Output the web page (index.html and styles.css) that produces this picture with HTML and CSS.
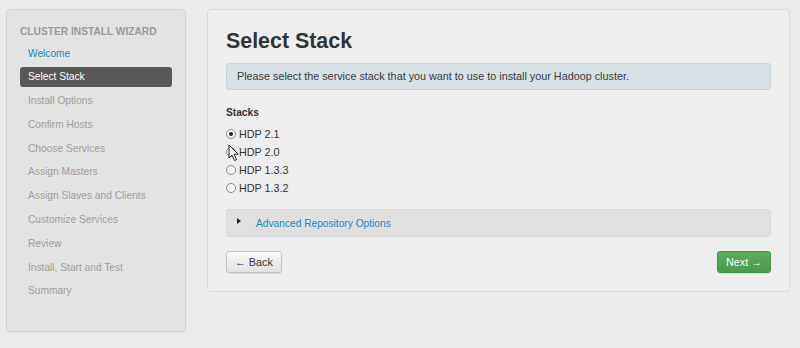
FILE: index.html
```html
<!DOCTYPE html>
<html>
<head>
<meta charset="utf-8">
<link rel="stylesheet" href="styles.css">
</head>
<body>
<div class="layout">
  <aside class="sidebar">
    <div class="wizard-title">CLUSTER INSTALL WIZARD</div>
    <ul class="steps">
      <li class="step done">Welcome</li>
      <li class="step active">Select Stack</li>
      <li class="step">Install Options</li>
      <li class="step">Confirm Hosts</li>
      <li class="step">Choose Services</li>
      <li class="step">Assign Masters</li>
      <li class="step">Assign Slaves and Clients</li>
      <li class="step">Customize Services</li>
      <li class="step">Review</li>
      <li class="step">Install, Start and Test</li>
      <li class="step">Summary</li>
    </ul>
  </aside>
  <main class="panel">
    <h2 class="title">Select Stack</h2>
    <div class="alert">Please select the service stack that you want to use to install your Hadoop cluster.</div>
    <div class="stacks-label">Stacks</div>
    <div class="radios">
      <label class="radio"><span class="dot checked"></span>HDP 2.1</label>
      <label class="radio"><span class="dot"></span>HDP 2.0</label>
      <label class="radio"><span class="dot"></span>HDP 1.3.3</label>
      <label class="radio"><span class="dot"></span>HDP 1.3.2</label>
      <svg class="cursor" width="12" height="18" viewBox="0 0 12 18"><path d="M1 1 L1 14 L4 11 L6.5 16.5 L8.5 15.6 L6 10.2 L10.2 10.2 Z" fill="#fff" stroke="#222" stroke-width="1" stroke-linejoin="round"/></svg>
    </div>
    <div class="accordion">
      <span class="caret"></span>
      <span class="acc-link">Advanced Repository Options</span>
    </div>
    <div class="actions">
      <button class="btn">&larr; Back</button>
      <button class="btn btn-success">Next &rarr;</button>
    </div>
  </main>
</div>
</body>
</html>
```
FILE: styles.css
```css
html, body {
  margin: 0;
  padding: 0;
}
body {
  background: #ebebeb;
  font-family: "Liberation Sans", Arial, sans-serif;
  font-size: 10.2px;
  color: #333;
  width: 800px;
  height: 348px;
  overflow: hidden;
}
.layout {
  display: flex;
  align-items: flex-start;
  gap: 21px;
  padding: 9px 10px 0 6px;
}
.sidebar {
  width: 152px;
  height: 305px;
  padding: 16px 13px 0 13px;
  background: #e3e3e3;
  border: 1px solid #d3d3d3;
  border-radius: 4px;
  box-shadow: 0 1px 1px rgba(0,0,0,0.04);
  flex: none;
}
.wizard-title {
  font-weight: bold;
  font-size: 10.2px;
  color: #9a9a9a;
  line-height: 12px;
  margin-bottom: 5.5px;
}
.steps {
  list-style: none;
  margin: 0;
  padding: 0;
}
.step {
  line-height: 20px;
  height: 20px;
  padding-left: 8px;
  margin-bottom: 3.8px;
  color: #9e9e9e;
  border-radius: 3px;
}
.step.done {
  color: #1a87c0;
}
.step.active {
  background: #575757;
  color: #fff;
}
.panel {
  flex: 1;
  height: 263px;
  background: #eeeeee;
  border: 1px solid #d9d9d9;
  border-radius: 4px;
  padding: 18px 18px 0 18px;
}
.title {
  margin: 0;
  font-size: 21.4px;
  font-weight: bold;
  color: #333;
  line-height: 26px;
  margin-bottom: 9px;
}
.alert {
  height: 25px;
  line-height: 25px;
  padding: 0 10px;
  font-size: 10.8px;
  background: #d8e1e6;
  border: 1px solid #c9d3da;
  border-radius: 3px;
  color: #3a3a3a;
}
.stacks-label {
  font-weight: bold;
  margin-top: 16px;
  line-height: 14px;
  color: #333;
}
.radios {
  position: relative;
  margin-top: 5px;
  display: flex;
  flex-direction: column;
}
.radio {
  display: flex;
  align-items: center;
  height: 18px;
  font-size: 10.8px;
  color: #333;
}
.dot {
  width: 10px;
  height: 10px;
  border: 1px solid #8a8a8a;
  border-radius: 50%;
  background: #f7f7f7;
  margin-right: 3px;
  box-sizing: border-box;
  position: relative;
  flex: none;
}
.dot.checked::after {
  content: "";
  position: absolute;
  left: 2px;
  top: 2px;
  width: 4px;
  height: 4px;
  border-radius: 50%;
  background: #222;
}
.cursor {
  position: absolute;
  left: 2px;
  top: 19px;
}
.accordion {
  margin-top: 12px;
  height: 26px;
  background: #e0e0e0;
  border: 1px solid #d9d9d9;
  border-radius: 3px;
  display: flex;
  align-items: center;
  padding-left: 10px;
}
.caret {
  width: 0;
  height: 0;
  border-top: 3px solid transparent;
  border-bottom: 3px solid transparent;
  border-left: 4px solid #222;
  margin-right: 15px;
  margin-top: -5px;
}
.acc-link {
  color: #1a87c0;
  font-size: 10.2px;
}
.actions {
  display: flex;
  justify-content: space-between;
  margin-top: 14px;
}
.btn {
  font-family: "Liberation Sans", Arial, sans-serif;
  font-size: 10.8px;
  height: 22px;
  padding: 0 8px;
  border-radius: 3px;
  border: 1px solid #c4c4c4;
  background: linear-gradient(#f8f8f8, #e2e2e2);
  color: #333;
  box-shadow: 0 1px 1px rgba(0,0,0,0.08);
}
.btn-success {
  background: linear-gradient(#59ad59, #4a9a4a);
  border-color: #45924a;
  color: #fff;
  padding: 0 8px;
}
```
